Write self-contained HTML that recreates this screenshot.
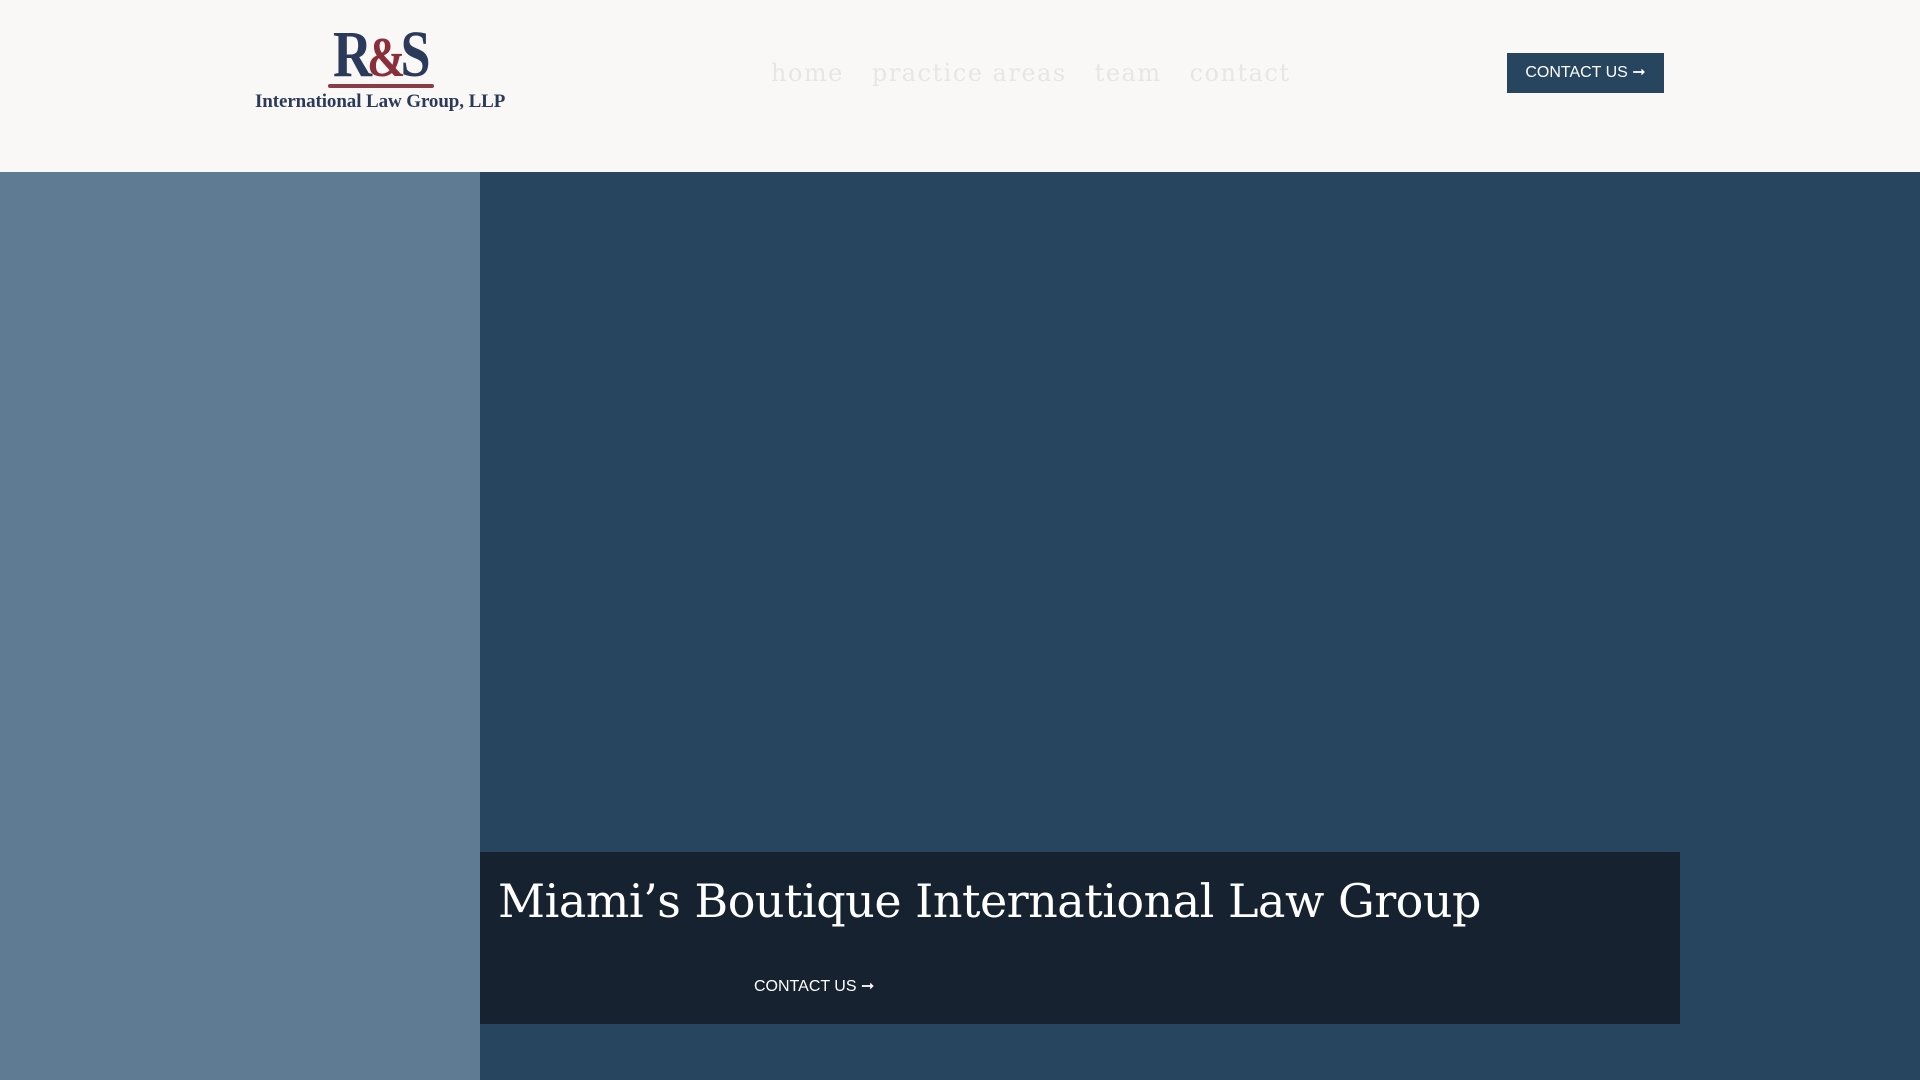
<!DOCTYPE html>
<html><head><meta charset="utf-8"><style>
*{margin:0;padding:0;box-sizing:border-box}
body{width:1920px;height:1080px;overflow:hidden;background:#284560;position:relative;font-family:"Liberation Serif",serif}
.hdr{position:absolute;left:0;top:0;width:1920px;height:172px;background:#f9f8f6}
.left{position:absolute;left:0;top:172px;width:480px;height:908px;background:#5f7a93}
.logo{position:absolute;left:333px;top:19px;font-size:66px;font-weight:bold;color:#2b3a5a;letter-spacing:-6px;line-height:72px;transform:scaleX(0.82);transform-origin:left}
.logo span{color:#8b2e3c;font-size:56px}
.bar{position:absolute;left:328px;top:84px;width:106px;height:4px;background:#8b3a48;border-radius:2px}
.sub{position:absolute;left:255px;top:90px;font-size:19px;font-weight:bold;color:#2b3a5a;white-space:nowrap;line-height:24px;letter-spacing:-0.1px}
.nav{position:absolute;top:59px;left:771px;font-family:"DejaVu Serif",serif;font-size:24px;color:#e8e6e2;letter-spacing:1.5px;white-space:nowrap}
.nav span{margin-right:28px}
.btn{position:absolute;left:1507px;top:53px;width:157px;height:40px;background:#284560;color:#fff;font-family:"Liberation Sans",sans-serif;font-size:16px;line-height:40px;text-align:center}
.box{position:absolute;left:480px;top:852px;width:1200px;height:172px;background:#162230}
.h1{position:absolute;left:18px;top:22px;font-family:"DejaVu Serif",serif;font-size:46px;color:#fff;white-space:nowrap;letter-spacing:-0.5px}
.c2{position:absolute;left:274px;top:124px;color:#fff;font-family:"Liberation Sans",sans-serif;font-size:16px}
</style></head><body>
<div class="hdr">
<div class="logo">R<span>&amp;</span>S</div>
<div class="bar"></div>
<div class="sub">International Law Group, LLP</div>
<div class="nav"><span>home</span><span>practice areas</span><span>team</span><span>contact</span></div>
<div class="btn">CONTACT US ➞</div>
</div>
<div class="left"></div>
<div class="box">
<div class="h1">Miami’s Boutique International Law Group</div>
<div class="c2">CONTACT US ➞</div>
</div>
</body></html>
